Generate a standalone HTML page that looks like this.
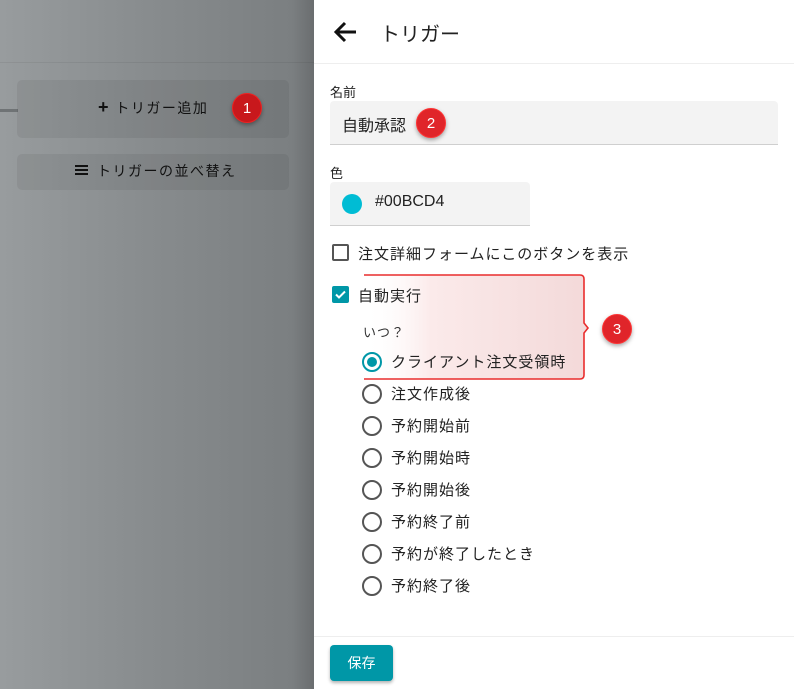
<!DOCTYPE html>
<html><head><meta charset="utf-8"><style>
*{margin:0;padding:0;box-sizing:border-box}
body{width:794px;height:689px;overflow:hidden;position:relative;font-family:"Liberation Sans","Noto Sans CJK JP",sans-serif;color:#222;background:#fff}
.a{position:absolute}
.left{left:0;top:0;width:314px;height:689px;background:linear-gradient(90deg,#989c9e 0%,#878b8d 50%,#7b7f81 93%,#6a6d6f 100%)}
.btn{background:rgba(0,0,0,0.06);border-radius:5px;font-size:14px;color:#111;letter-spacing:1px}
.badge{width:30px;height:30px;border-radius:50%;background:#e0252a;color:#fff;font-size:15px;text-align:center;line-height:30px;box-shadow:0 2px 4px rgba(0,0,0,.35);border:1.5px solid #f33}
.radio{width:20px;height:20px;border:2px solid #555;border-radius:50%}
.rl{font-size:15px;color:#222;letter-spacing:1px}
.box{background:#f3f3f3;border-bottom:1px solid #cfcfcf;border-radius:4px 4px 0 0}
</style></head><body>
<div class="a left"></div>
<div class="a" style="left:0;top:62px;width:314px;height:1px;background:rgba(0,0,0,.06)"></div>
<div class="a" style="left:0;top:109px;width:18px;height:3px;background:#6f7375"></div>
<div class="a btn" style="left:17px;top:80px;width:272px;height:58px"></div>
<div class="a" style="left:98px;top:97px;font-size:14px;color:#111;letter-spacing:1.5px"><b style="font-size:18px">+</b>&nbsp;トリガー追加</div>
<div class="a badge" style="left:232px;top:93px;background:#c8181c;border-color:#e22">1</div>
<div class="a btn" style="left:17px;top:154px;width:272px;height:36px"></div>
<div class="a" style="left:75px;top:165px;width:13px;height:2px;background:#111;box-shadow:0 4px 0 #111,0 8px 0 #111"></div>
<div class="a" style="left:97px;top:161px;font-size:14px;color:#111;letter-spacing:1.5px">トリガーの並べ替え</div>

<div class="a" style="left:314px;top:63px;width:480px;height:1px;background:#eee"></div>
<svg class="a" style="left:333px;top:20px" width="26" height="24" viewBox="0 0 26 24"><path d="M23 12H4M12 3L3 12l9 9" stroke="#111" stroke-width="3" fill="none"/></svg>
<div class="a" style="left:380px;top:18px;font-size:20px;letter-spacing:0px;color:#222">トリガー</div>

<div class="a" style="left:330px;top:82px;font-size:13px">名前</div>
<div class="a box" style="left:330px;top:101px;width:448px;height:44px"></div>
<div class="a" style="left:342px;top:112px;font-size:16px">自動承認</div>
<div class="a badge" style="left:416px;top:108px">2</div>

<div class="a" style="left:330px;top:163px;font-size:13px">色</div>
<div class="a box" style="left:330px;top:182px;width:200px;height:44px"></div>
<div class="a" style="left:342px;top:194px;width:20px;height:20px;border-radius:50%;background:#00bcd4"></div>
<div class="a" style="left:375px;top:193px;font-size:16px">#00BCD4</div>

<div class="a" style="left:332px;top:244px;width:17px;height:17px;border:2px solid #555;border-radius:2px"></div>
<div class="a rl" style="left:358px;top:243px">注文詳細フォームにこのボタンを表示</div>

<svg class="a" style="left:360px;top:273px" width="240" height="110" viewBox="0 0 240 110"><defs><linearGradient id="g" x1="0" x2="1"><stop offset="0" stop-color="#fff" stop-opacity="0"/><stop offset=".3" stop-color="#fbeaea"/><stop offset="1" stop-color="#f3d9d9"/></linearGradient></defs><path d="M4 2H220q4 0 4 4V50l4 5-4 5V102q0 4-4 4H4" fill="url(#g)" stroke="#e92d2d" stroke-width="1.6"/></svg>

<div class="a" style="left:332px;top:286px;width:17px;height:17px;background:#0097a7;border-radius:2px"></div>
<svg class="a" style="left:334px;top:289px" width="13" height="11"><path d="M2 5.5l3 3 6-6" stroke="#fff" stroke-width="2" fill="none"/></svg>
<div class="a rl" style="left:358px;top:285px">自動実行</div>
<div class="a" style="left:363px;top:322px;font-size:13px;color:#333;letter-spacing:1px">いつ？</div>
<div class="a badge" style="left:602px;top:314px">3</div>

<div class="a radio" style="left:362px;top:352px;border-color:#0097a7"></div>
<div class="a" style="left:367px;top:357px;width:10px;height:10px;border-radius:50%;background:#0097a7"></div>
<div class="a rl" style="left:391px;top:351px">クライアント注文受領時</div>
<div class="a radio" style="left:362px;top:384px"></div><div class="a rl" style="left:391px;top:383px">注文作成後</div>
<div class="a radio" style="left:362px;top:416px"></div><div class="a rl" style="left:391px;top:415px">予約開始前</div>
<div class="a radio" style="left:362px;top:448px"></div><div class="a rl" style="left:391px;top:447px">予約開始時</div>
<div class="a radio" style="left:362px;top:480px"></div><div class="a rl" style="left:391px;top:479px">予約開始後</div>
<div class="a radio" style="left:362px;top:512px"></div><div class="a rl" style="left:391px;top:511px">予約終了前</div>
<div class="a radio" style="left:362px;top:544px"></div><div class="a rl" style="left:391px;top:543px">予約が終了したとき</div>
<div class="a radio" style="left:362px;top:576px"></div><div class="a rl" style="left:391px;top:575px">予約終了後</div>

<div class="a" style="left:314px;top:636px;width:480px;height:1px;background:#eee"></div>
<div class="a" style="left:330px;top:645px;width:63px;height:36px;background:#0097a7;border-radius:4px;box-shadow:0 2px 3px rgba(0,0,0,.3);color:#fff;font-size:14px;text-align:center;line-height:36px">保存</div>
</body></html>
